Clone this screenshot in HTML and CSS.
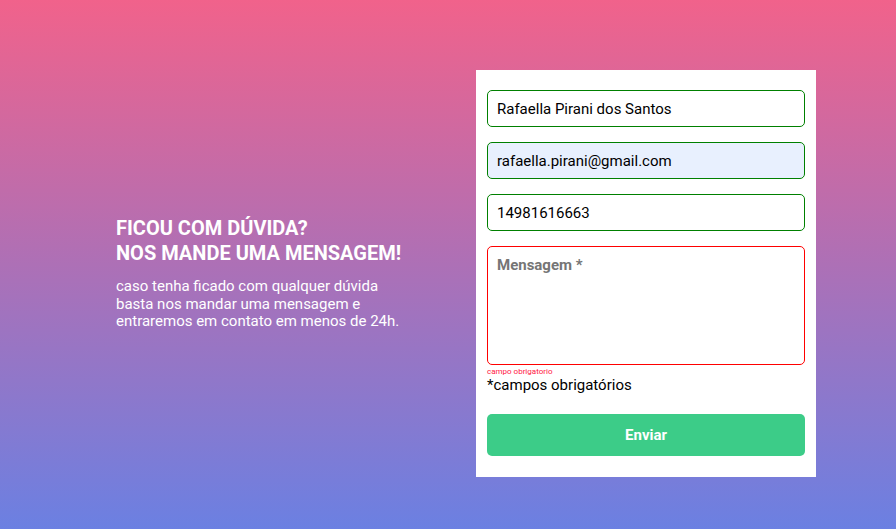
FILE: index.html
```html
<!DOCTYPE html>
<html lang="pt-BR">
<head>
<meta charset="utf-8">
<title>Contato</title>
<link rel="stylesheet" href="styles.css">
</head>
<body>
<main class="page">
  <section class="intro">
    <h1 class="intro-title">FICOU COM DÚVIDA?<br>NOS MANDE UMA MENSAGEM!</h1>
    <p class="intro-text">caso tenha ficado com qualquer dúvida basta nos mandar uma mensagem e entraremos em contato em menos de 24h.</p>
  </section>
  <form class="card">
    <div class="field">
      <input class="input" type="text" value="Rafaella Pirani dos Santos">
    </div>
    <div class="field">
      <input class="input input-autofill" type="email" value="rafaella.pirani@gmail.com">
    </div>
    <div class="field">
      <input class="input" type="tel" value="14981616663">
    </div>
    <div class="field field-msg">
      <textarea class="textarea" placeholder="Mensagem *"></textarea>
      <span class="error">campo obrigatorio</span>
    </div>
    <p class="note">*campos obrigatórios</p>
    <button class="btn" type="button">Enviar</button>
  </form>
</main>
</body>
</html>
```

FILE: styles.css
```css
* { box-sizing: border-box; }
html, body { margin: 0; padding: 0; }
body {
  font-family: Roboto, "Liberation Sans", sans-serif;
  background: linear-gradient(180deg, #f1628b 0%, #ad70b6 50%, #6b80e2 100%);
  min-height: 529px;
}
.page {
  height: 529px;
  display: flex;
  align-items: center;
  padding-left: 116px;
  padding-top: 18px;
  gap: 73px;
}
.intro {
  width: 287px;
  color: #fff;
}
.intro-title {
  margin: 0 0 12px;
  font-size: 20px;
  font-weight: 700;
  line-height: 25px;
}
.intro-text {
  margin: 0;
  font-size: 15px;
  line-height: 17.5px;
}
.card {
  width: 340px;
  background: #fff;
  padding: 20px 11px 21px;
  display: flex;
  flex-direction: column;
}
.field { margin-bottom: 15px; }
.field-msg { margin-bottom: 0; display: flex; flex-direction: column; }
.input, .textarea {
  display: block;
  width: 100%;
  border: 1px solid #008000;
  border-radius: 5px;
  font-family: Roboto, "Liberation Sans", sans-serif;
  font-size: 15px;
  color: #000;
  background: #fff;
  outline: none;
}
.input {
  height: 37px;
  padding: 0 9px;
}
.input-autofill { background: #e8f0fe; }
.textarea {
  height: 119px;
  padding: 9px 9px;
  border-color: #ff0000;
  resize: none;
}
.textarea::placeholder {
  color: #757575;
  font-weight: 700;
}
.error {
  color: #ff1744;
  font-size: 8px;
  line-height: 9px;
  margin-top: 2px;
}
.note {
  margin: 0 0 20px;
  font-size: 15px;
  line-height: 18px;
  color: #000;
}
.btn {
  height: 42px;
  border: none;
  border-radius: 5px;
  background: #3ccc88;
  color: #fff;
  font-family: Roboto, "Liberation Sans", sans-serif;
  font-size: 15px;
  font-weight: 700;
  cursor: pointer;
}
```
